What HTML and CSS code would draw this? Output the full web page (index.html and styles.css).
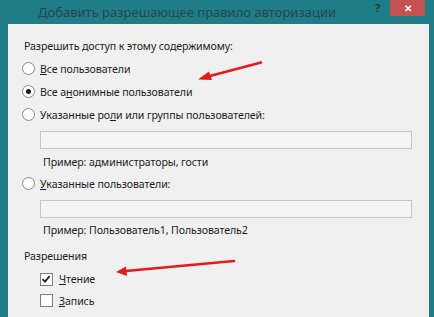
FILE: index.html
```html
<!DOCTYPE html>
<html lang="ru">
<head>
<meta charset="utf-8">
<link rel="stylesheet" href="styles.css">
</head>
<body>
<div class="window">
  <div class="titlebar">
    <span class="title">Добавить разрешающее правило авторизации</span>
    <span class="help">?</span>
    <span class="close">✕</span>
  </div>
  <div class="panel">
    <div class="row heading">Разрешить доступ к этому содержимому:</div>
    <div class="row opt"><span class="radio"></span><span><u>В</u>се пользователи</span></div>
    <div class="row opt"><span class="radio checked"></span><span>Все а<u>н</u>онимные пользователи</span></div>
    <div class="row opt"><span class="radio"></span><span>Указанные ро<u>л</u>и или группы пользователей:</span></div>
    <div class="textbox"></div>
    <div class="row example">Пример: администраторы, гости</div>
    <div class="row opt"><span class="radio"></span><span><u>У</u>казанные пользователи:</span></div>
    <div class="textbox"></div>
    <div class="row example ex2">Пример: Пользователь1, Пользователь2</div>
    <div class="row heading perm">Разрешения</div>
    <div class="row chk"><span class="checkbox checked"><svg viewBox="0 0 12 12" width="12" height="12"><path d="M2.5 6.2 L5 8.7 L9.6 3.2" fill="none" stroke="#222" stroke-width="1.8"/></svg></span><span><u>Ч</u>тение</span></div>
    <div class="row chk chk2"><span class="checkbox"></span><span><u>З</u>апись</span></div>
  </div>
</div>
<svg class="arrows" width="434" height="317" viewBox="0 0 434 317">
  <line x1="261" y1="62.5" x2="208" y2="76.5" stroke="#e41b1b" stroke-width="2.6" stroke-linecap="round"/>
  <polygon points="198,79.5 209,71.5 212,80" fill="#e41b1b"/>
  <line x1="234" y1="261" x2="126" y2="271" stroke="#e41b1b" stroke-width="2.6" stroke-linecap="round"/>
  <polygon points="116,272 126,266.5 127,276" fill="#e41b1b"/>
</svg>
</body>
</html>
```
FILE: styles.css
```css
html, body {
  margin: 0;
  padding: 0;
}
body {
  background: #1f7d88;
  width: 434px;
  height: 317px;
  overflow: hidden;
  position: relative;
  font-family: "Noto Sans", "Open Sans", sans-serif;
}
.window {
  display: flex;
  flex-direction: column;
  height: 317px;
}
.titlebar {
  height: 24px;
  display: flex;
  align-items: flex-start;
  flex-shrink: 0;
}
.title {
  margin-left: 38px;
  margin-top: 2px;
  font-size: 13px;
  line-height: 20px;
  color: #26474f;
  white-space: nowrap;
}
.help {
  margin-left: auto;
  margin-top: 1px;
  font-size: 11px;
  font-weight: bold;
  color: #1f3a40;
  line-height: 14px;
  width: 8px;
}
.close {
  margin-left: 7px;
  margin-right: 9px;
  width: 35px;
  height: 16px;
  background: #c75050;
  color: #fff;
  font-size: 10px;
  font-weight: bold;
  line-height: 16px;
  text-align: center;
}
.panel {
  flex: 1;
  margin-left: 8px;
  margin-right: 5px;
  background: #f0f0f0;
  padding: 10px 17px 0 14px;
  font-size: 10.6px;
  letter-spacing: -0.1px;
  color: #1c1c1c;
}
.row {
  display: flex;
  align-items: center;
  height: 23px;
  white-space: nowrap;
}
.heading {
  padding-left: 2px;
}
.opt {
  gap: 5px;
}
.radio {
  width: 11px;
  height: 11px;
  border: 1px solid #8a8a8a;
  border-radius: 50%;
  background: #fff;
  box-sizing: content-box;
  flex-shrink: 0;
  position: relative;
  display: flex;
  align-items: center;
  justify-content: center;
}
.radio.checked::after {
  content: "";
  width: 5px;
  height: 5px;
  border-radius: 50%;
  background: #1a1a1a;
}
.textbox {
  margin: 5px 0 0 18px;
  height: 16px;
  border: 1px solid #c6c6c6;
  background: #f5f5f5;
}
.example {
  margin-left: 21px;
  margin-top: 3px;
  height: 20px;
}
.ex2 {
  height: 24px;
  margin-top: 0;
}
.perm {
  margin-top: 4px;
  height: 20px;
}
.chk {
  margin-left: 18px;
  margin-top: 2px;
  height: 22px;
  gap: 6px;
}
.chk2 {
  margin-top: 0;
  height: 21px;
}
.checkbox {
  width: 11px;
  height: 11px;
  border: 1px solid #7d7d7d;
  background: #fff;
  flex-shrink: 0;
  display: flex;
}
.checkbox svg {
  margin: -1px 0 0 -1px;
}
.arrows {
  position: absolute;
  left: 0;
  top: 0;
  pointer-events: none;
}
```
